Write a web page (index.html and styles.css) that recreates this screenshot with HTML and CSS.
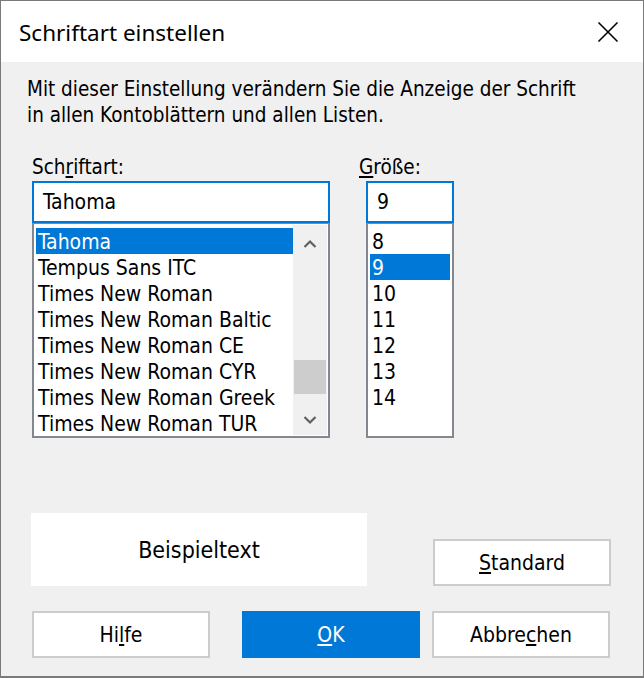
FILE: index.html
```html
<!DOCTYPE html>
<html lang="de">

<head>
    <meta charset="UTF-8">
    <title>Schriftart einstellen</title>
    <link rel="stylesheet" href="styles.css">
</head>

<body>

    <div class="dialog">
        <!-- Title bar -->
        <div class="titlebar">
            <span class="title">Schriftart einstellen</span>
            <span class="close">
                <svg width="22" height="22" viewBox="0 0 22 22">
                    <path d="M1.5 1.5 L20.5 20.5 M20.5 1.5 L1.5 20.5" stroke="#000" stroke-width="1.6" fill="none" />
                </svg>
            </span>
        </div>

        <div class="content">
            <p class="intro">Mit dieser Einstellung verändern Sie die Anzeige der Schrift<br>in allen Kontoblättern und allen Listen.</p>

            <div class="pickers">
                <!-- Font name -->
                <div class="col col-font">
                    <label class="label">Sch<u>r</u>iftart:</label>
                    <div class="edit">Tahoma</div>
                    <div class="listbox">
                        <ul class="items">
                            <li class="selected">Tahoma</li>
                            <li>Tempus Sans ITC</li>
                            <li>Times New Roman</li>
                            <li>Times New Roman Baltic</li>
                            <li>Times New Roman CE</li>
                            <li>Times New Roman CYR</li>
                            <li>Times New Roman Greek</li>
                            <li>Times New Roman TUR</li>
                        </ul>
                        <div class="scrollbar">
                            <svg class="arrow arrow-up" width="14" height="10" viewBox="0 0 14 10">
                                <path d="M1.5 8 L7 2.5 L12.5 8" stroke="#606060" stroke-width="2.2" fill="none" />
                            </svg>
                            <div class="thumb"></div>
                            <svg class="arrow arrow-down" width="14" height="10" viewBox="0 0 14 10">
                                <path d="M1.5 2 L7 7.5 L12.5 2" stroke="#606060" stroke-width="2.2" fill="none" />
                            </svg>
                        </div>
                    </div>
                </div>

                <!-- Font size -->
                <div class="col col-size">
                    <label class="label label-size"><u>G</u>röße:</label>
                    <div class="edit">9</div>
                    <div class="listbox">
                        <ul class="items">
                            <li>8</li>
                            <li class="selected">9</li>
                            <li>10</li>
                            <li>11</li>
                            <li>12</li>
                            <li>13</li>
                            <li>14</li>
                        </ul>
                    </div>
                </div>
            </div>

            <div class="sample-row">
                <div class="sample">Beispieltext</div>
                <button class="btn"><u>S</u>tandard</button>
            </div>

            <div class="button-row">
                <button class="btn">Hi<u>l</u>fe</button>
                <button class="btn btn-primary"><u>O</u>K</button>
                <button class="btn">Abbre<u>c</u>hen</button>
            </div>
        </div>
    </div>

</body>

</html>
```

FILE: styles.css
```css
/* General Reset */
* {
    margin: 0;
    padding: 0;
    box-sizing: border-box;
}

body {
    background: #f0f0f0;
    font-family: 'DejaVu Sans Condensed', 'DejaVu Sans', sans-serif;
    color: #000;
}

/* Window */
.dialog {
    width: 644px;
    height: 678px;
    background: #f0f0f0;
    border: 1px solid #7a7a7a;
    border-bottom-width: 2px;
}

.titlebar {
    height: 61px;
    background: #fff;
    display: flex;
    align-items: center;
    justify-content: space-between;
    padding: 0 24px 0 18px;
}

.title {
    font-family: 'Noto Sans', sans-serif;
    font-size: 22.5px;
    margin-top: 1px;
}

.close {
    display: flex;
}

/* Content */
.content {
    padding: 14px 0 0 31px;
}

.intro {
    font-size: 20.5px;
    line-height: 26px;
    margin-left: -5px;
}

.pickers {
    display: flex;
    gap: 36px;
    margin-top: 26px;
}

.col {
    display: flex;
    flex-direction: column;
}

.col-font {
    width: 298px;
}

.col-size {
    width: 88px;
}

.label {
    font-size: 20.5px;
    line-height: 26px;
    margin-bottom: 1px;
}

.label-size {
    margin-left: -7px;
}

.edit {
    height: 42px;
    border: 2px solid #0078d7;
    background: #fff;
    font-size: 21px;
    line-height: 38px;
    padding-left: 9px;
}

.listbox {
    height: 215px;
    border: 2px solid #828790;
    border-top-width: 1px;
    background: #fff;
    display: flex;
    padding: 4px 2px 2px;
}

.items {
    list-style: none;
    flex: 1;
}

.items li {
    height: 26px;
    line-height: 28px;
    font-size: 21px;
    padding-left: 2px;
    white-space: nowrap;
}

.items li.selected {
    background: #0078d7;
    color: #fff;
}

/* Scrollbar */
.scrollbar {
    width: 34px;
    margin: -3px -1px -1px 0;
    background: #f0f0f0;
    display: flex;
    flex-direction: column;
    align-items: center;
}

.arrow-up {
    margin-top: 14px;
}

.thumb {
    width: 32px;
    height: 34px;
    margin-top: 111px;
    background: #cdcdcd;
}

.arrow-down {
    margin-top: 21px;
}

/* Sample and buttons */
.sample-row {
    display: flex;
    align-items: flex-end;
    margin-top: 75px;
    margin-left: -1px;
}

.sample {
    width: 336px;
    height: 73px;
    background: #fff;
    display: flex;
    align-items: center;
    justify-content: center;
    font-size: 23px;
    margin-right: 66px;
}

.btn {
    width: 178px;
    height: 47px;
    background: #fff;
    border: 2px solid #cccccc;
    font-family: 'DejaVu Sans Condensed', 'DejaVu Sans', sans-serif;
    font-size: 21px;
    color: #000;
}

.btn-primary {
    background: #0078d7;
    border-color: #0078d7;
    color: #fff;
}

.button-row {
    display: flex;
    gap: 32px;
    margin-top: 25px;
}

.button-row .btn:last-child {
    margin-left: -20px;
}
```
